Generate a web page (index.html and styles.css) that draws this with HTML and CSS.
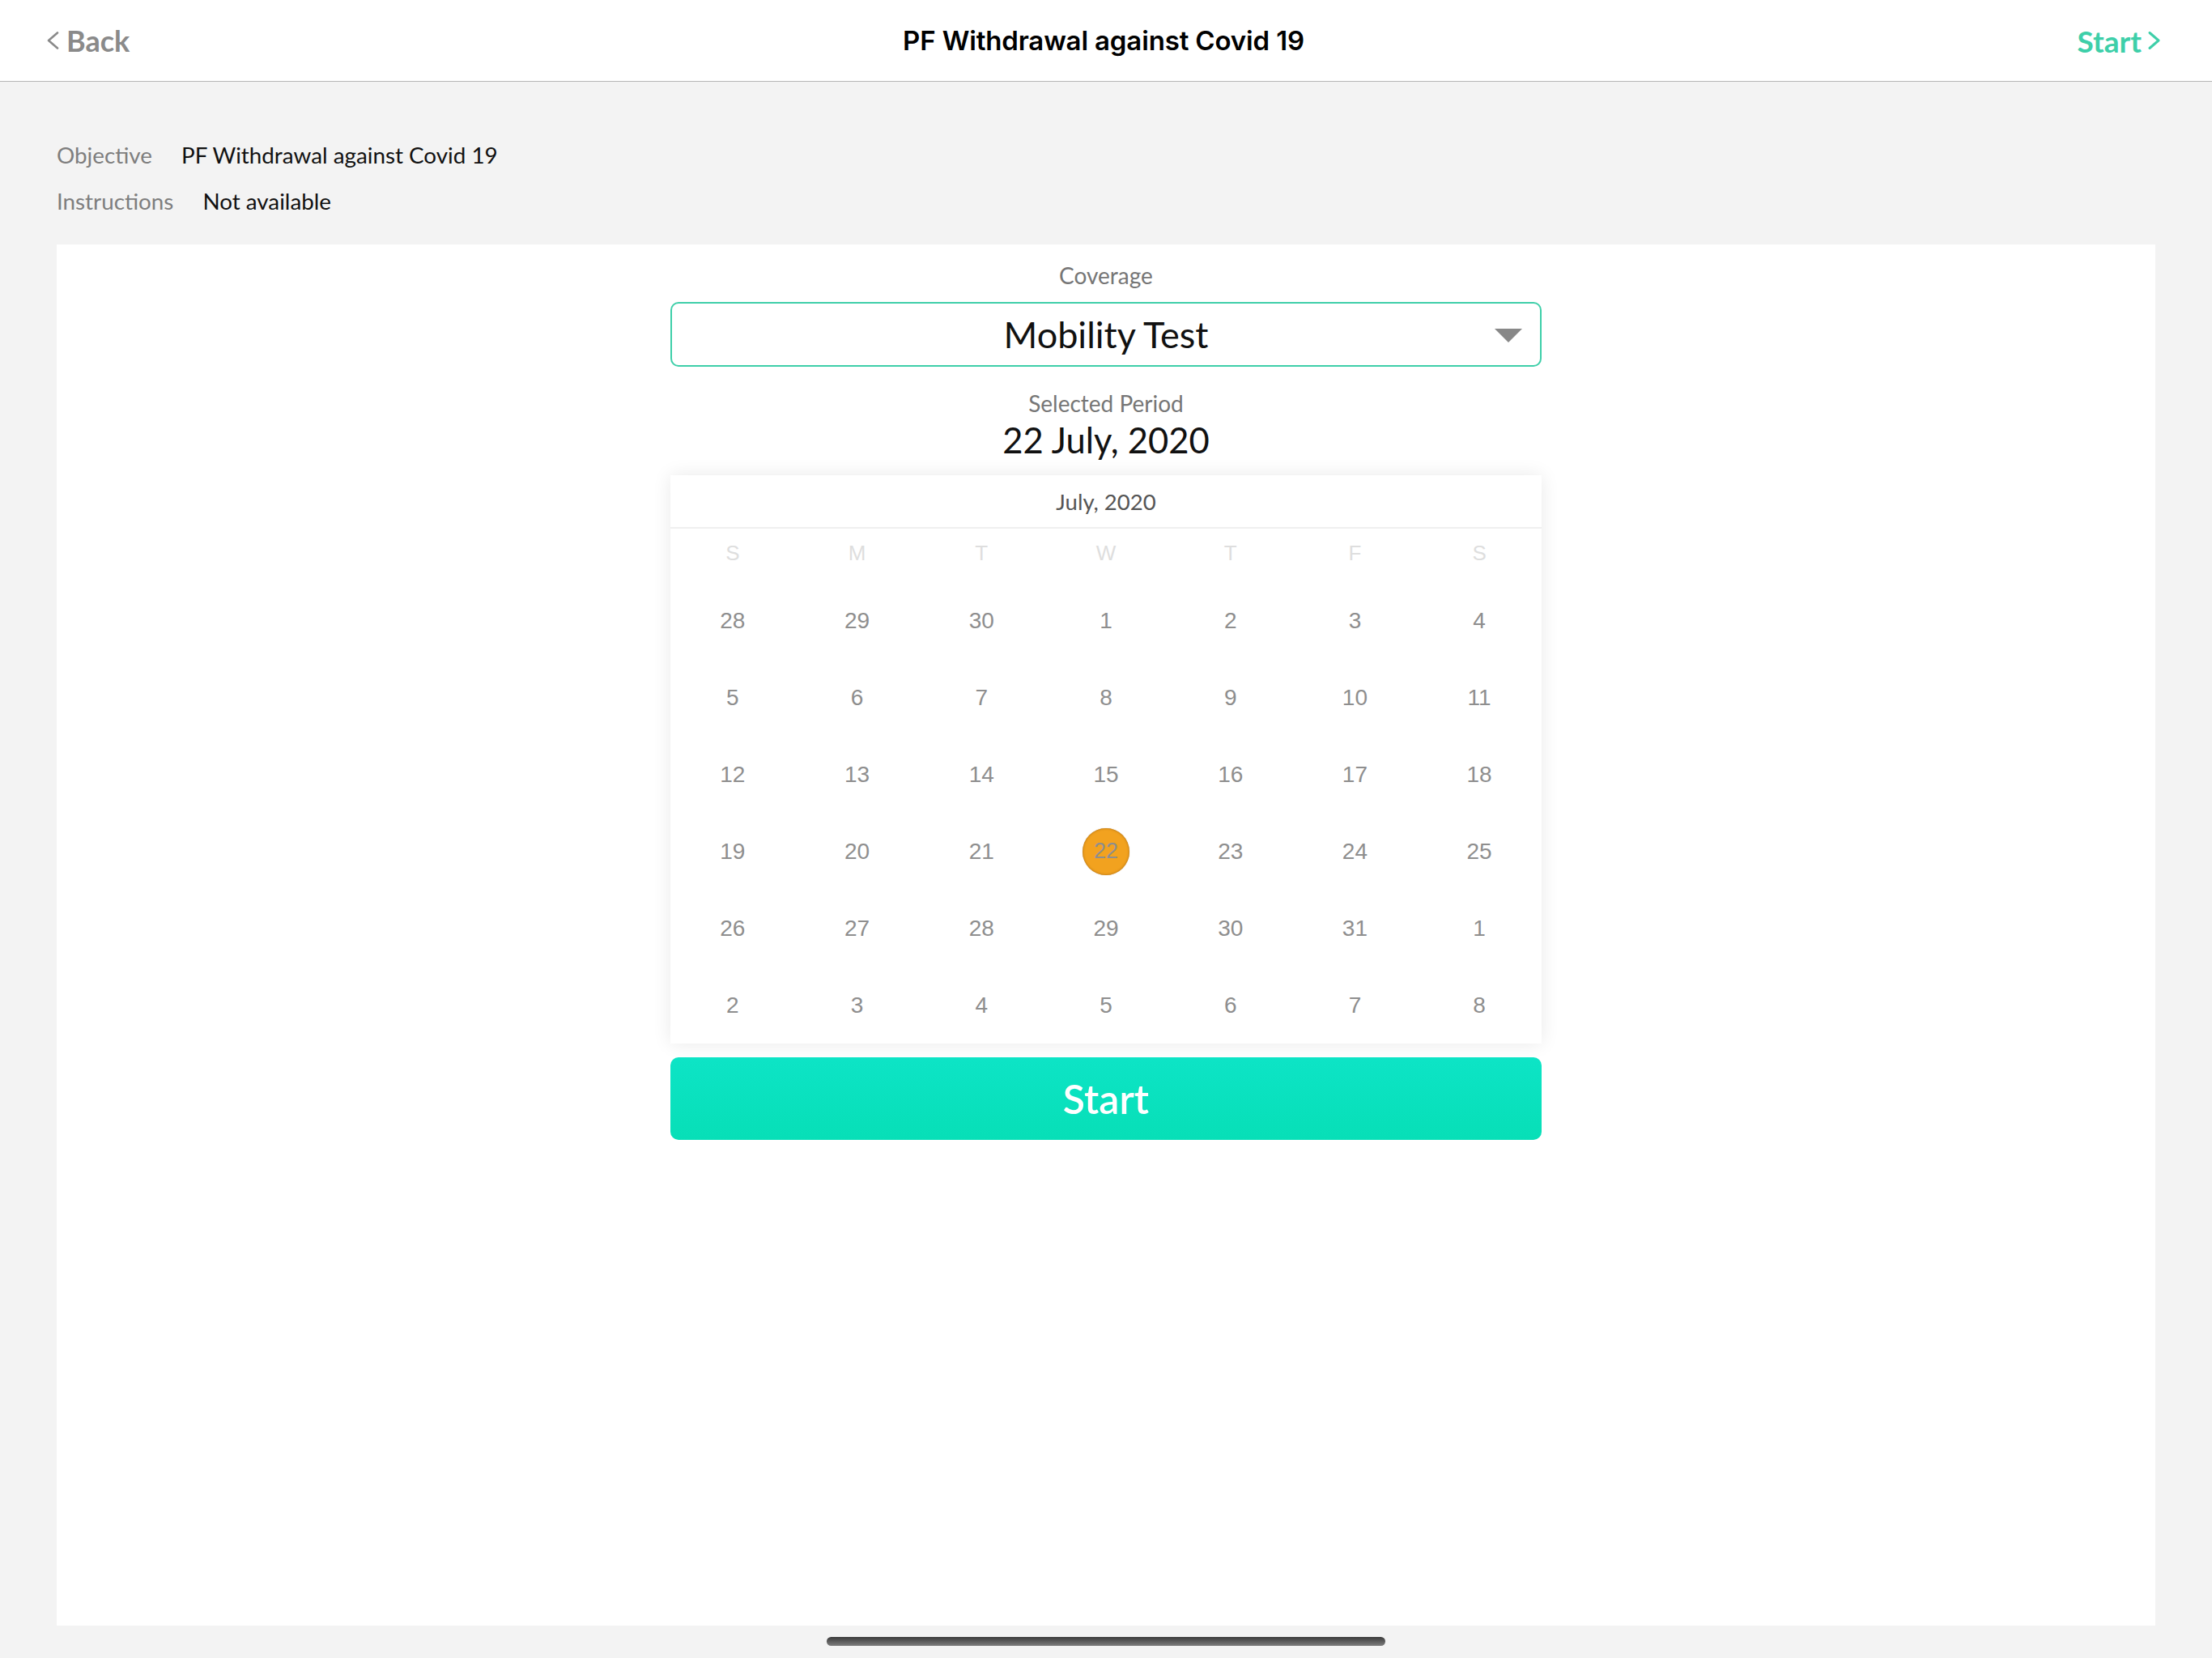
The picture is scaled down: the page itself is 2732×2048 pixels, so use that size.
FILE: index.html
```html
<!DOCTYPE html>
<html lang="en">
<head>
<meta charset="utf-8">
<title>PF Withdrawal against Covid 19</title>
<link rel="stylesheet" href="styles.css">
</head>
<body>
<div class="screen">
  <header class="topbar">
    <a class="nav-back">
      <svg class="chev" width="16" height="22" viewBox="0 0 16 22"><polyline points="14,1.5 3,11 14,20.5" fill="none" stroke="#8a8a8a" stroke-width="2.6" stroke-linecap="round" stroke-linejoin="round"/></svg>
      <span>Back</span>
    </a>
    <h1 class="title">PF Withdrawal against Covid 19</h1>
    <a class="nav-start">
      <span>Start</span>
      <svg class="chev" width="16" height="22" viewBox="0 0 16 22"><polyline points="2,1.5 13,11 2,20.5" fill="none" stroke="#3ecfa9" stroke-width="3" stroke-linecap="round" stroke-linejoin="round"/></svg>
    </a>
  </header>

  <main class="main">
    <section class="info">
      <div class="info-row"><span class="info-label">Objective</span><span class="info-value">PF Withdrawal against Covid 19</span></div>
      <div class="info-row"><span class="info-label">Instructions</span><span class="info-value">Not available</span></div>
    </section>

    <section class="card">
      <div class="panel">
        <div class="field-label">Coverage</div>
        <div class="select">
          <span class="select-value">Mobility Test</span>
          <span class="select-arrow"></span>
        </div>
        <div class="field-label period-label">Selected Period</div>
        <div class="period-value">22 July, 2020</div>

        <div class="calendar">
          <div class="cal-head">July, 2020</div>
          <div class="cal-week">
            <span>S</span><span>M</span><span>T</span><span>W</span><span>T</span><span>F</span><span>S</span>
          </div>
          <div class="cal-days">
            <span>28</span><span>29</span><span>30</span><span>1</span><span>2</span><span>3</span><span>4</span>
            <span>5</span><span>6</span><span>7</span><span>8</span><span>9</span><span>10</span><span>11</span>
            <span>12</span><span>13</span><span>14</span><span>15</span><span>16</span><span>17</span><span>18</span>
            <span>19</span><span>20</span><span>21</span><span><b class="selected">22</b></span><span>23</span><span>24</span><span>25</span>
            <span>26</span><span>27</span><span>28</span><span>29</span><span>30</span><span>31</span><span>1</span>
            <span>2</span><span>3</span><span>4</span><span>5</span><span>6</span><span>7</span><span>8</span>
          </div>
        </div>

        <button class="start-btn">Start</button>
      </div>
    </section>
  </main>

  <div class="home-indicator"></div>
</div>
</body>
</html>
```

FILE: styles.css
```css
* { box-sizing: border-box; }

html, body {
  margin: 0;
  padding: 0;
}

body {
  background: #f3f3f3;
  font-family: Lato, "Open Sans", "Liberation Sans", sans-serif;
  color: #111;
}

.screen {
  position: relative;
  width: 2732px;
  height: 2048px;
  overflow: hidden;
  background: #f3f3f3;
}

/* Top bar */
.topbar {
  height: 101px;
  background: #fff;
  border-bottom: 1px solid #b5b5b5;
  display: grid;
  grid-template-columns: 1fr auto 1fr;
  align-items: center;
  padding: 0 63px 0 57px;
}

.nav-back {
  display: flex;
  align-items: center;
  gap: 9px;
  color: #8a8a8a;
  font-size: 36px;
  font-weight: 700;
  justify-self: start;
}

.nav-start {
  display: flex;
  align-items: center;
  gap: 8px;
  color: #3ecfa9;
  font-size: 37px;
  font-weight: 700;
  justify-self: end;
}

.chev { display: block; }

.title {
  margin: 0;
  font-family: Inter, Roboto, "Liberation Sans", sans-serif;
  font-weight: 600;
  font-size: 33px;
  color: #000;
  letter-spacing: -0.15px;
}

/* Main */
.main {
  padding: 0 70px;
}

.info {
  padding-top: 74px;
  display: flex;
  flex-direction: column;
  gap: 24px;
  margin-bottom: 36px;
}

.info-row {
  display: flex;
  gap: 36px;
  font-size: 27.8px;
  line-height: 1.2;
}

.info-label { color: #7e7e7e; }
.info-value { color: #111; }

.card {
  background: #fff;
  height: 1706px;
}

.panel {
  width: 1076px;
  margin: 0 auto;
  padding-top: 22px;
  display: flex;
  flex-direction: column;
  text-align: center;
}

.field-label {
  font-size: 28px;
  line-height: 1.2;
  color: #767676;
}

.select {
  position: relative;
  margin-top: 16px;
  height: 80px;
  border: 2px solid #3ecfa9;
  border-radius: 10px;
  display: flex;
  align-items: center;
  justify-content: center;
}

.select-value {
  font-size: 45px;
  line-height: 1.2;
  color: #111;
}

.select-arrow {
  position: absolute;
  right: 22px;
  top: 31px;
  width: 0;
  height: 0;
  border-left: 17px solid transparent;
  border-right: 17px solid transparent;
  border-top: 17px solid #888;
}

.period-label {
  margin-top: 29px;
}

.period-value {
  margin-top: 1px;
  font-size: 43.5px;
  line-height: 1.2;
  color: #111;
}

/* Calendar */
.calendar {
  margin-top: 18px;
  background: #fff;
  box-shadow: 0 0 22px rgba(0, 0, 0, 0.09);
}

.cal-head {
  height: 64px;
  display: flex;
  align-items: center;
  justify-content: center;
  font-size: 27.5px;
  color: #555;
  border-bottom: 2px solid #efefef;
  box-sizing: content-box;
}

.cal-week {
  display: grid;
  grid-template-columns: repeat(7, 1fr);
  height: 65px;
  align-items: center;
  padding-bottom: 4px;
  font-family: "Liberation Sans", Arial, sans-serif;
  font-size: 26px;
  color: #dedede;
}

.cal-days {
  display: grid;
  grid-template-columns: repeat(7, 1fr);
  grid-auto-rows: 95.1px;
  align-items: center;
  justify-items: center;
  font-family: "Liberation Sans", Arial, sans-serif;
  font-size: 28px;
  color: #8e8e8e;
}

.cal-days span {
  display: flex;
  align-items: center;
  justify-content: center;
  padding-top: 2px;
}

.selected {
  font-weight: 400;
  width: 58px;
  height: 58px;
  border-radius: 50%;
  background: #f2a21f;
  color: #8e8e8e;
  display: flex;
  align-items: center;
  justify-content: center;
  font-size: 27px;
  box-shadow: inset 0 0 3px rgba(110, 60, 0, 0.55), 0 0 1px rgba(150, 90, 0, 0.5);
}

.start-btn {
  margin-top: 17px;
  height: 102px;
  border: 0;
  border-radius: 10px;
  background: linear-gradient(to bottom, #0de4c6, #07dfb7);
  color: #fff;
  font-family: Lato, "Open Sans", sans-serif;
  font-weight: 600;
  font-size: 50px;
  line-height: 1;
  padding: 0;
}

.home-indicator {
  position: absolute;
  left: 1021px;
  top: 2022px;
  width: 690px;
  height: 11px;
  border-radius: 6px;
  background: linear-gradient(to bottom, #3a3a3a, #7d7d7d);
}
```
